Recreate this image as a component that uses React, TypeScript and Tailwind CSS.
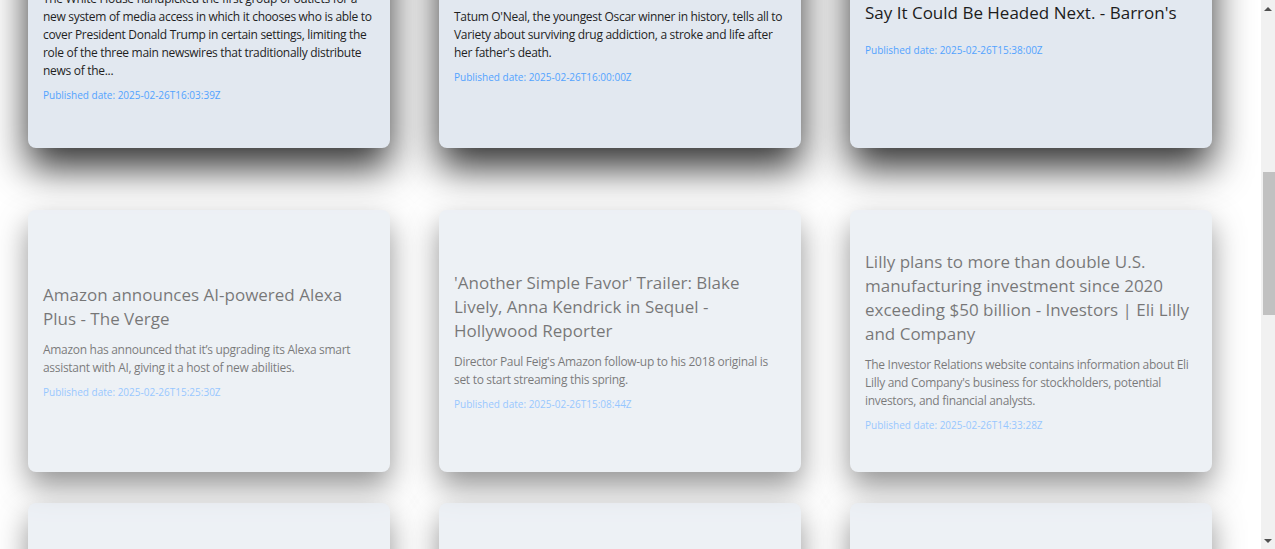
import React from "react";

type Article = {
  title: string;
  description: string;
  publishedAt: string;
};

const rows: { articles: Article[]; faded: boolean }[] = [
  {
    faded: false,
    articles: [
      {
        title: "White House picks press pool, limiting role of newswires - AP News",
        description:
          "The White House handpicked the first group of outlets for a new system of media access in which it chooses who is able to cover President Donald Trump in certain settings, limiting the role of the three main newswires that traditionally distribute news of the...",
        publishedAt: "2025-02-26T16:03:39Z",
      },
      {
        title: "Tatum O'Neal on Surviving Addiction and a Stroke - Variety",
        description:
          "Tatum O'Neal, the youngest Oscar winner in history, tells all to Variety about surviving drug addiction, a stroke and life after her father's death.",
        publishedAt: "2025-02-26T16:00:00Z",
      },
      {
        title: "Bitcoin Plunges. Here's Where Analysts Say It Could Be Headed Next. - Barron's",
        description: "",
        publishedAt: "2025-02-26T15:38:00Z",
      },
    ],
  },
  {
    faded: true,
    articles: [
      {
        title: "Amazon announces AI-powered Alexa Plus - The Verge",
        description:
          "Amazon has announced that it\u2019s upgrading its Alexa smart assistant with AI, giving it a host of new abilities.",
        publishedAt: "2025-02-26T15:25:30Z",
      },
      {
        title:
          "'Another Simple Favor' Trailer: Blake Lively, Anna Kendrick in Sequel - Hollywood Reporter",
        description:
          "Director Paul Feig's Amazon follow-up to his 2018 original is set to start streaming this spring.",
        publishedAt: "2025-02-26T15:08:44Z",
      },
      {
        title:
          "Lilly plans to more than double U.S. manufacturing investment since 2020 exceeding $50 billion - Investors | Eli Lilly and Company",
        description:
          "The Investor Relations website contains information about Eli Lilly and Company's business for stockholders, potential investors, and financial analysts.",
        publishedAt: "2025-02-26T14:33:28Z",
      },
    ],
  },
  {
    faded: true,
    articles: [
      {
        title: "Stocks rally as tech shares rebound - CNBC",
        description: "Markets opened higher on Wednesday.",
        publishedAt: "2025-02-26T14:20:00Z",
      },
      {
        title: "New study links sleep to memory - Science",
        description: "Researchers found a strong connection.",
        publishedAt: "2025-02-26T14:02:11Z",
      },
      {
        title: "NASA prepares next lunar mission - Space.com",
        description: "The agency shared an updated timeline.",
        publishedAt: "2025-02-26T13:47:05Z",
      },
    ],
  },
];

const NewsCard = (props: { article: Article; faded: boolean }) => {
  return (
    <article
      className={
        props.faded
          ? "h-[262px] rounded-lg bg-slate-200 px-[15px] flex flex-col justify-center opacity-60 shadow-[0_14px_30px_rgba(0,0,0,0.7)]"
          : "h-[262px] rounded-lg bg-slate-200 px-[15px] flex flex-col justify-center shadow-[0_20px_38px_rgba(0,0,0,0.8)]"
      }
    >
      <h2 className="text-[17px] leading-6 text-[#1c1c1c]">{props.article.title}</h2>
      <p className="mt-[10px] text-[12px] tracking-[-0.3px] leading-[18px] text-[#1f1f1f]">
        {props.article.description}
      </p>
      <p className="mt-2 text-[10px] leading-[15px] text-blue-400">
        Published date: {props.article.publishedAt}
      </p>
    </article>
  );
};

const Scrollbar = () => {
  return (
    <div className="w-[14px] h-full bg-[#f1f1f1] flex flex-col items-center">
      <div className="h-[17px] w-full flex items-center justify-center">
        <div className="w-0 h-0 border-x-[4px] border-x-transparent border-b-[4px] border-b-[#505050]" />
      </div>
      <div className="h-[155px]" />
      <div className="h-[143px] w-[12px] ml-[2px] bg-[#c1c1c1]" />
      <div className="flex-1" />
      <div className="h-[17px] w-full flex items-center justify-center">
        <div className="w-0 h-0 border-x-[4px] border-x-transparent border-t-[4px] border-t-[#505050]" />
      </div>
    </div>
  );
};

export default function App() {
  return (
    <div
      className="flex h-[549px] w-full overflow-hidden bg-white"
      style={{ fontFamily: '"Open Sans", "Noto Sans", sans-serif' }}
    >
      <main className="flex-1 overflow-hidden pl-[28px]">
        <div className="-mt-[114px] flex flex-col">
          {rows.map((row, i) => (
            <div
              key={i}
              className={
                i === 0
                  ? "grid grid-cols-[repeat(3,362px)] gap-x-[49px]"
                  : i === 1
                  ? "grid grid-cols-[repeat(3,362px)] gap-x-[49px] mt-[62px]"
                  : "grid grid-cols-[repeat(3,362px)] gap-x-[49px] mt-[31px]"
              }
            >
              {row.articles.map((a) => (
                <NewsCard key={a.publishedAt} article={a} faded={row.faded} />
              ))}
            </div>
          ))}
        </div>
      </main>
      <Scrollbar />
    </div>
  );
}
